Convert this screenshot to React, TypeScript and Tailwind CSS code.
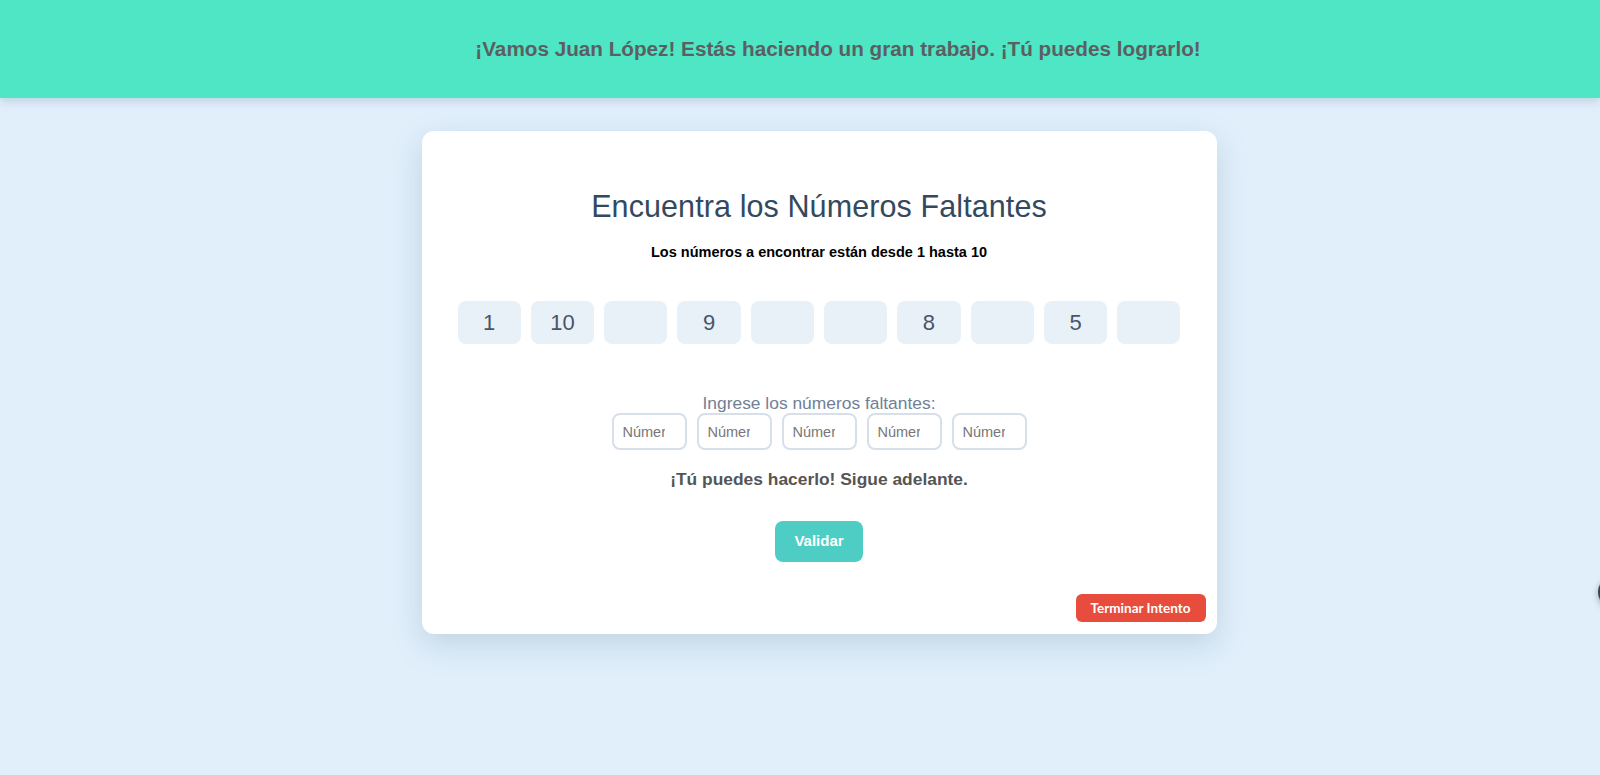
import React from "react";

const tiles = ["1", "10", "", "9", "", "", "8", "", "5", ""];

export default function App() {
  return (
    <div
      className="relative min-h-[775px] overflow-hidden bg-[#e1effb]"
      style={{ fontFamily: '"Liberation Sans", Arial, sans-serif' }}
    >
      <header className="flex h-[98px] items-center justify-center bg-[#4ee6c4] pl-[76px] shadow-[0_4px_8px_rgba(100,140,160,0.25)]">
        <h2 className="text-[20.7px] font-bold text-[#5b5f62]">
          ¡Vamos Juan López! Estás haciendo un gran trabajo. ¡Tú puedes lograrlo!
        </h2>
      </header>

      <main className="flex justify-center pl-[38px] pt-[33px]">
        <div className="relative w-[795px] rounded-[12px] bg-white px-[36px] pb-[72px] pt-[57px] shadow-[0_10px_30px_rgba(90,130,160,0.25)]">
          <h1 className="text-center text-[30.5px] leading-[36px] font-normal tracking-[0.1px] text-[#34495e]">
            Encuentra los Números Faltantes
          </h1>
          <p className="mt-[18px] text-center text-[14.5px] leading-[20px] font-bold text-black">
            Los números a encontrar están desde 1 hasta 10
          </p>

          <div className="mt-[39px] flex gap-[10px]">
            {tiles.map((t, i) => (
              <div
                key={i}
                className="flex h-[43px] flex-1 items-center justify-center rounded-[8px] bg-[#e8f0f8] text-[22px] text-[#4a5568]"
              >
                {t}
              </div>
            ))}
          </div>

          <p className="mt-[49px] text-center text-[17.4px] leading-[20px] text-[#718096]">
            Ingrese los números faltantes:
          </p>
          <div className="flex justify-center gap-[10px]">
            {[0, 1, 2, 3, 4].map((i) => (
              <input
                key={i}
                type="text"
                placeholder="Número"
                className="h-[37px] w-[75px] rounded-[8px] border-2 border-[#d6dfea] bg-white pl-[9px] pr-[20px] text-[14.5px] text-[#333] outline-none placeholder:text-[#777]"
              />
            ))}
          </div>

          <p className="mt-[18px] text-center text-[17.4px] leading-[22px] font-bold text-[#555]">
            ¡Tú puedes hacerlo! Sigue adelante.
          </p>

          <div className="mt-[31px] flex justify-center">
            <button className="h-[41px] w-[88px] rounded-[8px] bg-[#4ecdc4] text-[15px] font-bold text-white">
              Validar
            </button>
          </div>

          <button
            className="absolute bottom-[12px] right-[11px] h-[28px] w-[130px] rounded-[6px] bg-[#e74c3c] text-[13.5px] font-bold text-white"
            style={{ fontFamily: 'Lato, "Liberation Sans", sans-serif' }}
          >
            Terminar Intento
          </button>
        </div>
      </main>

      <div className="absolute left-[1598px] top-[576px] h-[32px] w-[32px] rounded-full bg-[#3b4148] shadow-[0_2px_6px_rgba(0,0,0,0.3)]" />
    </div>
  );
}
